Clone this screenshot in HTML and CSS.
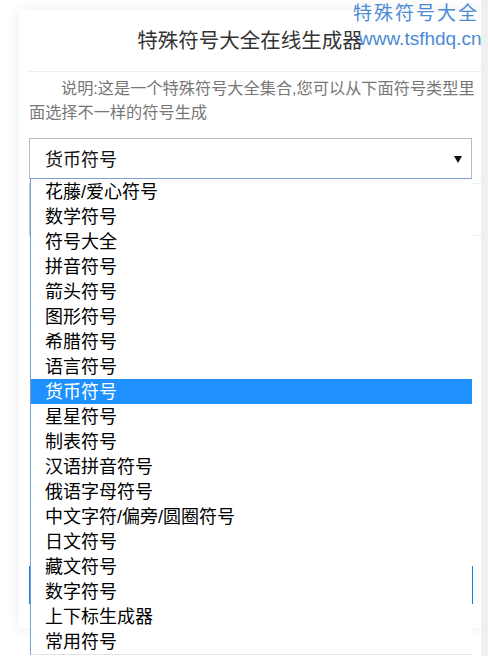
FILE: index.html
```html
<!DOCTYPE html>
<html>
<head>
  <meta charset="utf-8">
  <title>特殊符号大全在线生成器</title>
  <link rel="stylesheet" href="styles.css">
</head>
<body>
  <div class="mark">
    <div class="mark-name">特殊符号大全</div>
    <div class="mark-url">www.tsfhdq.cn</div>
  </div>

  <div class="card">
    <h1 class="title">特殊符号大全在线生成器</h1>
    <div class="content">
      <p class="desc">说明:这是一个特殊符号大全集合,您可以从下面符号类型里面选择不一样的符号生成</p>

      <!-- the type picker, shown open -->
      <div class="picker">
        <span class="picker-value">货币符号</span>
        <span class="picker-arrow"></span>
        <ul class="picker-list">
          <li>花藤/爱心符号</li>
          <li>数学符号</li>
          <li>符号大全</li>
          <li>拼音符号</li>
          <li>箭头符号</li>
          <li>图形符号</li>
          <li>希腊符号</li>
          <li>语言符号</li>
          <li class="active">货币符号</li>
          <li>星星符号</li>
          <li>制表符号</li>
          <li>汉语拼音符号</li>
          <li>俄语字母符号</li>
          <li>中文字符/偏旁/圆圈符号</li>
          <li>日文符号</li>
          <li>藏文符号</li>
          <li>数字符号</li>
          <li>上下标生成器</li>
          <li>常用符号</li>
        </ul>
      </div>

      <div class="symbols"></div>
      <div class="output"></div>
      <div class="actions">
        <button class="copy-btn" type="button">复制</button>
      </div>
    </div>
  </div>
</body>
</html>
```

FILE: styles.css
```css
html {
  background-color: #f0f0f0;
}

body {
  margin: 0;
  padding: 10px 0 0 19px;
  width: 462px;
  min-height: 646px;
  background-color: #ffffff;
  font-family: "Liberation Sans", "Noto Sans CJK SC", sans-serif;
  color: #333;
}

.mark {
  position: absolute;
  top: 1px;
  left: 353px;
  color: #4d8ad6;
  font-size: 19px;
  line-height: 25px;
}

.mark-name {
  letter-spacing: 2px;
}

.mark-url {
  margin-left: 6px;
  font-size: 19px;
}

.card {
  width: 462px;
  padding-bottom: 24px;
  background-color: #ffffff;
  box-shadow: 7px 0 0 #f0f0f0, 0 0 14px rgba(0, 0, 0, 0.08);
}

.title {
  margin: 0;
  height: 61px;
  line-height: 61px;
  text-align: center;
  font-size: 20.5px;
  font-weight: normal;
  color: #333;
}

.content {
  margin-left: 10px;
  border-top: 1px solid #eeeeee;
}

.desc {
  margin: 5px 0 14px;
  font-size: 16.2px;
  line-height: 23.5px;
  text-indent: 32px;
  color: #777;
}

.picker {
  position: relative;
  box-sizing: border-box;
  width: 443px;
  height: 41px;
  padding: 4px 0 0 15px;
  border: 1px solid #bcbcbc;
  font-size: 18px;
  line-height: 35px;
  color: #111;
  z-index: 2;
}

.picker-arrow {
  position: absolute;
  top: 17px;
  right: 9px;
  border-left: 4px solid transparent;
  border-right: 4px solid transparent;
  border-top: 7px solid #111;
}

.picker-list {
  position: absolute;
  top: 39px;
  left: 0;
  box-sizing: border-box;
  width: 442px;
  margin: 0;
  padding: 0;
  list-style: none;
  background-color: #ffffff;
  border-top: 1px solid #7f9ed6;
  border-left: 1px solid #7f9ed6;
  border-bottom: 1px solid #e4e4e4;
}

.picker-list li {
  height: 25px;
  box-sizing: border-box;
  padding: 2px 0 0 14px;
  line-height: 23px;
  font-size: 18px;
  color: #000;
}

.picker-list li.active {
  background-color: #1e90ff;
  color: #ffffff;
}

.symbols {
  height: 51px;
  margin-top: 4px;
  border-top: 1px solid #eeeeee;
  border-bottom: 1px solid #eeeeee;
  border-left: 2px solid #cccccc;
}

.output {
  height: 330px;
}

.actions {
  height: 38px;
  width: 444px;
}

.copy-btn {
  box-sizing: border-box;
  width: 100%;
  height: 38px;
  background-color: #ffffff;
  border: 2px solid #0b84e3;
  font-family: inherit;
}
```
